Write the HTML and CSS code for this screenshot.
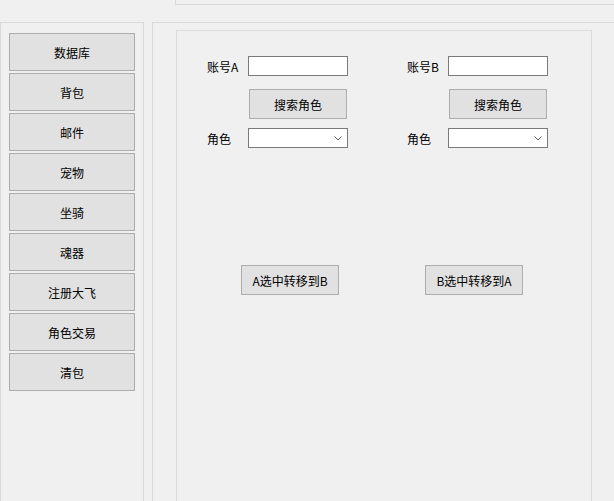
FILE: index.html
```html
<!DOCTYPE html>
<html lang="zh-CN">
<head>
<meta charset="utf-8">
<title>角色交易</title>
<link rel="stylesheet" href="styles.css">
</head>
<body>
<div class="topbox"></div>
<div class="main">
  <div class="side">
    <div class="navbtn">数据库</div>
    <div class="navbtn">背包</div>
    <div class="navbtn">邮件</div>
    <div class="navbtn">宠物</div>
    <div class="navbtn">坐骑</div>
    <div class="navbtn">魂器</div>
    <div class="navbtn">注册大飞</div>
    <div class="navbtn">角色交易</div>
    <div class="navbtn">清包</div>
  </div>
  <div class="content">
    <div class="inner">
      <div class="cols">
        <div class="col">
          <div class="row"><span class="label">账号A</span><div class="input"></div></div>
          <div class="btn search">搜索角色</div>
          <div class="row combo-row"><span class="label">角色</span><div class="input combo"><svg class="chev" width="8" height="5" viewBox="0 0 8 5"><polyline points="0.5,0.5 4,4 7.5,0.5" fill="none" stroke="#606060" stroke-width="1"/></svg></div></div>
        </div>
        <div class="col">
          <div class="row"><span class="label">账号B</span><div class="input"></div></div>
          <div class="btn search">搜索角色</div>
          <div class="row combo-row"><span class="label">角色</span><div class="input combo"><svg class="chev" width="8" height="5" viewBox="0 0 8 5"><polyline points="0.5,0.5 4,4 7.5,0.5" fill="none" stroke="#606060" stroke-width="1"/></svg></div></div>
        </div>
      </div>
      <div class="transfer">
        <div class="btn move-a">A选中转移到B</div>
        <div class="btn move-b">B选中转移到A</div>
      </div>
    </div>
  </div>
</div>
</body>
</html>
```
FILE: styles.css
```css
html, body {
  margin: 0;
  padding: 0;
  background: #f0f0f0;
  overflow: hidden;
  width: 614px;
  height: 501px;
  font-family: "Noto Sans CJK SC", "Noto Sans", sans-serif;
  font-size: 12px;
  color: #000;
}
.topbox {
  margin-left: 175px;
  height: 4px;
  border-left: 1px solid #dadada;
  border-bottom: 1px solid #dadada;
}
.main {
  display: flex;
  margin-top: 17px;
  gap: 8px;
}
.side {
  box-sizing: border-box;
  width: 144px;
  height: 479px;
  border: 1px solid #dadada;
  border-bottom: none;
  padding: 10px 0 0 8px;
  display: flex;
  flex-direction: column;
  gap: 2px;
}
.navbtn {
  box-sizing: border-box;
  width: 126px;
  height: 38px;
  background: #e1e1e1;
  border: 1px solid #adadad;
  display: flex;
  align-items: center;
  justify-content: center;
}
.content {
  box-sizing: border-box;
  flex: 1;
  height: 479px;
  border-top: 1px solid #dadada;
  border-left: 1px solid #dadada;
  padding: 7px 0 0 23px;
}
.inner {
  box-sizing: border-box;
  width: 416px;
  height: 471px;
  border: 1px solid #dcdcdc;
  border-bottom: none;
  padding: 25px 0 0 30px;
}
.cols {
  display: flex;
}
.col {
  flex: none;
  width: 200px;
  display: flex;
  flex-direction: column;
}
.row {
  display: flex;
  align-items: center;
  height: 20px;
}
.label {
  width: 41px;
}
.input {
  box-sizing: border-box;
  width: 100px;
  height: 20px;
  background: #fff;
  border: 1px solid #7a7a7a;
}
.combo {
  position: relative;
}
.chev {
  position: absolute;
  right: 5px;
  top: 7px;
}
.btn {
  box-sizing: border-box;
  width: 98px;
  height: 30px;
  background: #e1e1e1;
  border: 1px solid #adadad;
  display: flex;
  align-items: center;
  justify-content: center;
}
.search {
  margin: 13px 0 0 42px;
}
.combo-row {
  margin-top: 9px;
}
.transfer {
  display: flex;
  margin-top: 117px;
}
.move-a {
  margin-left: 34px;
}
.move-b {
  margin-left: 86px;
}
```
